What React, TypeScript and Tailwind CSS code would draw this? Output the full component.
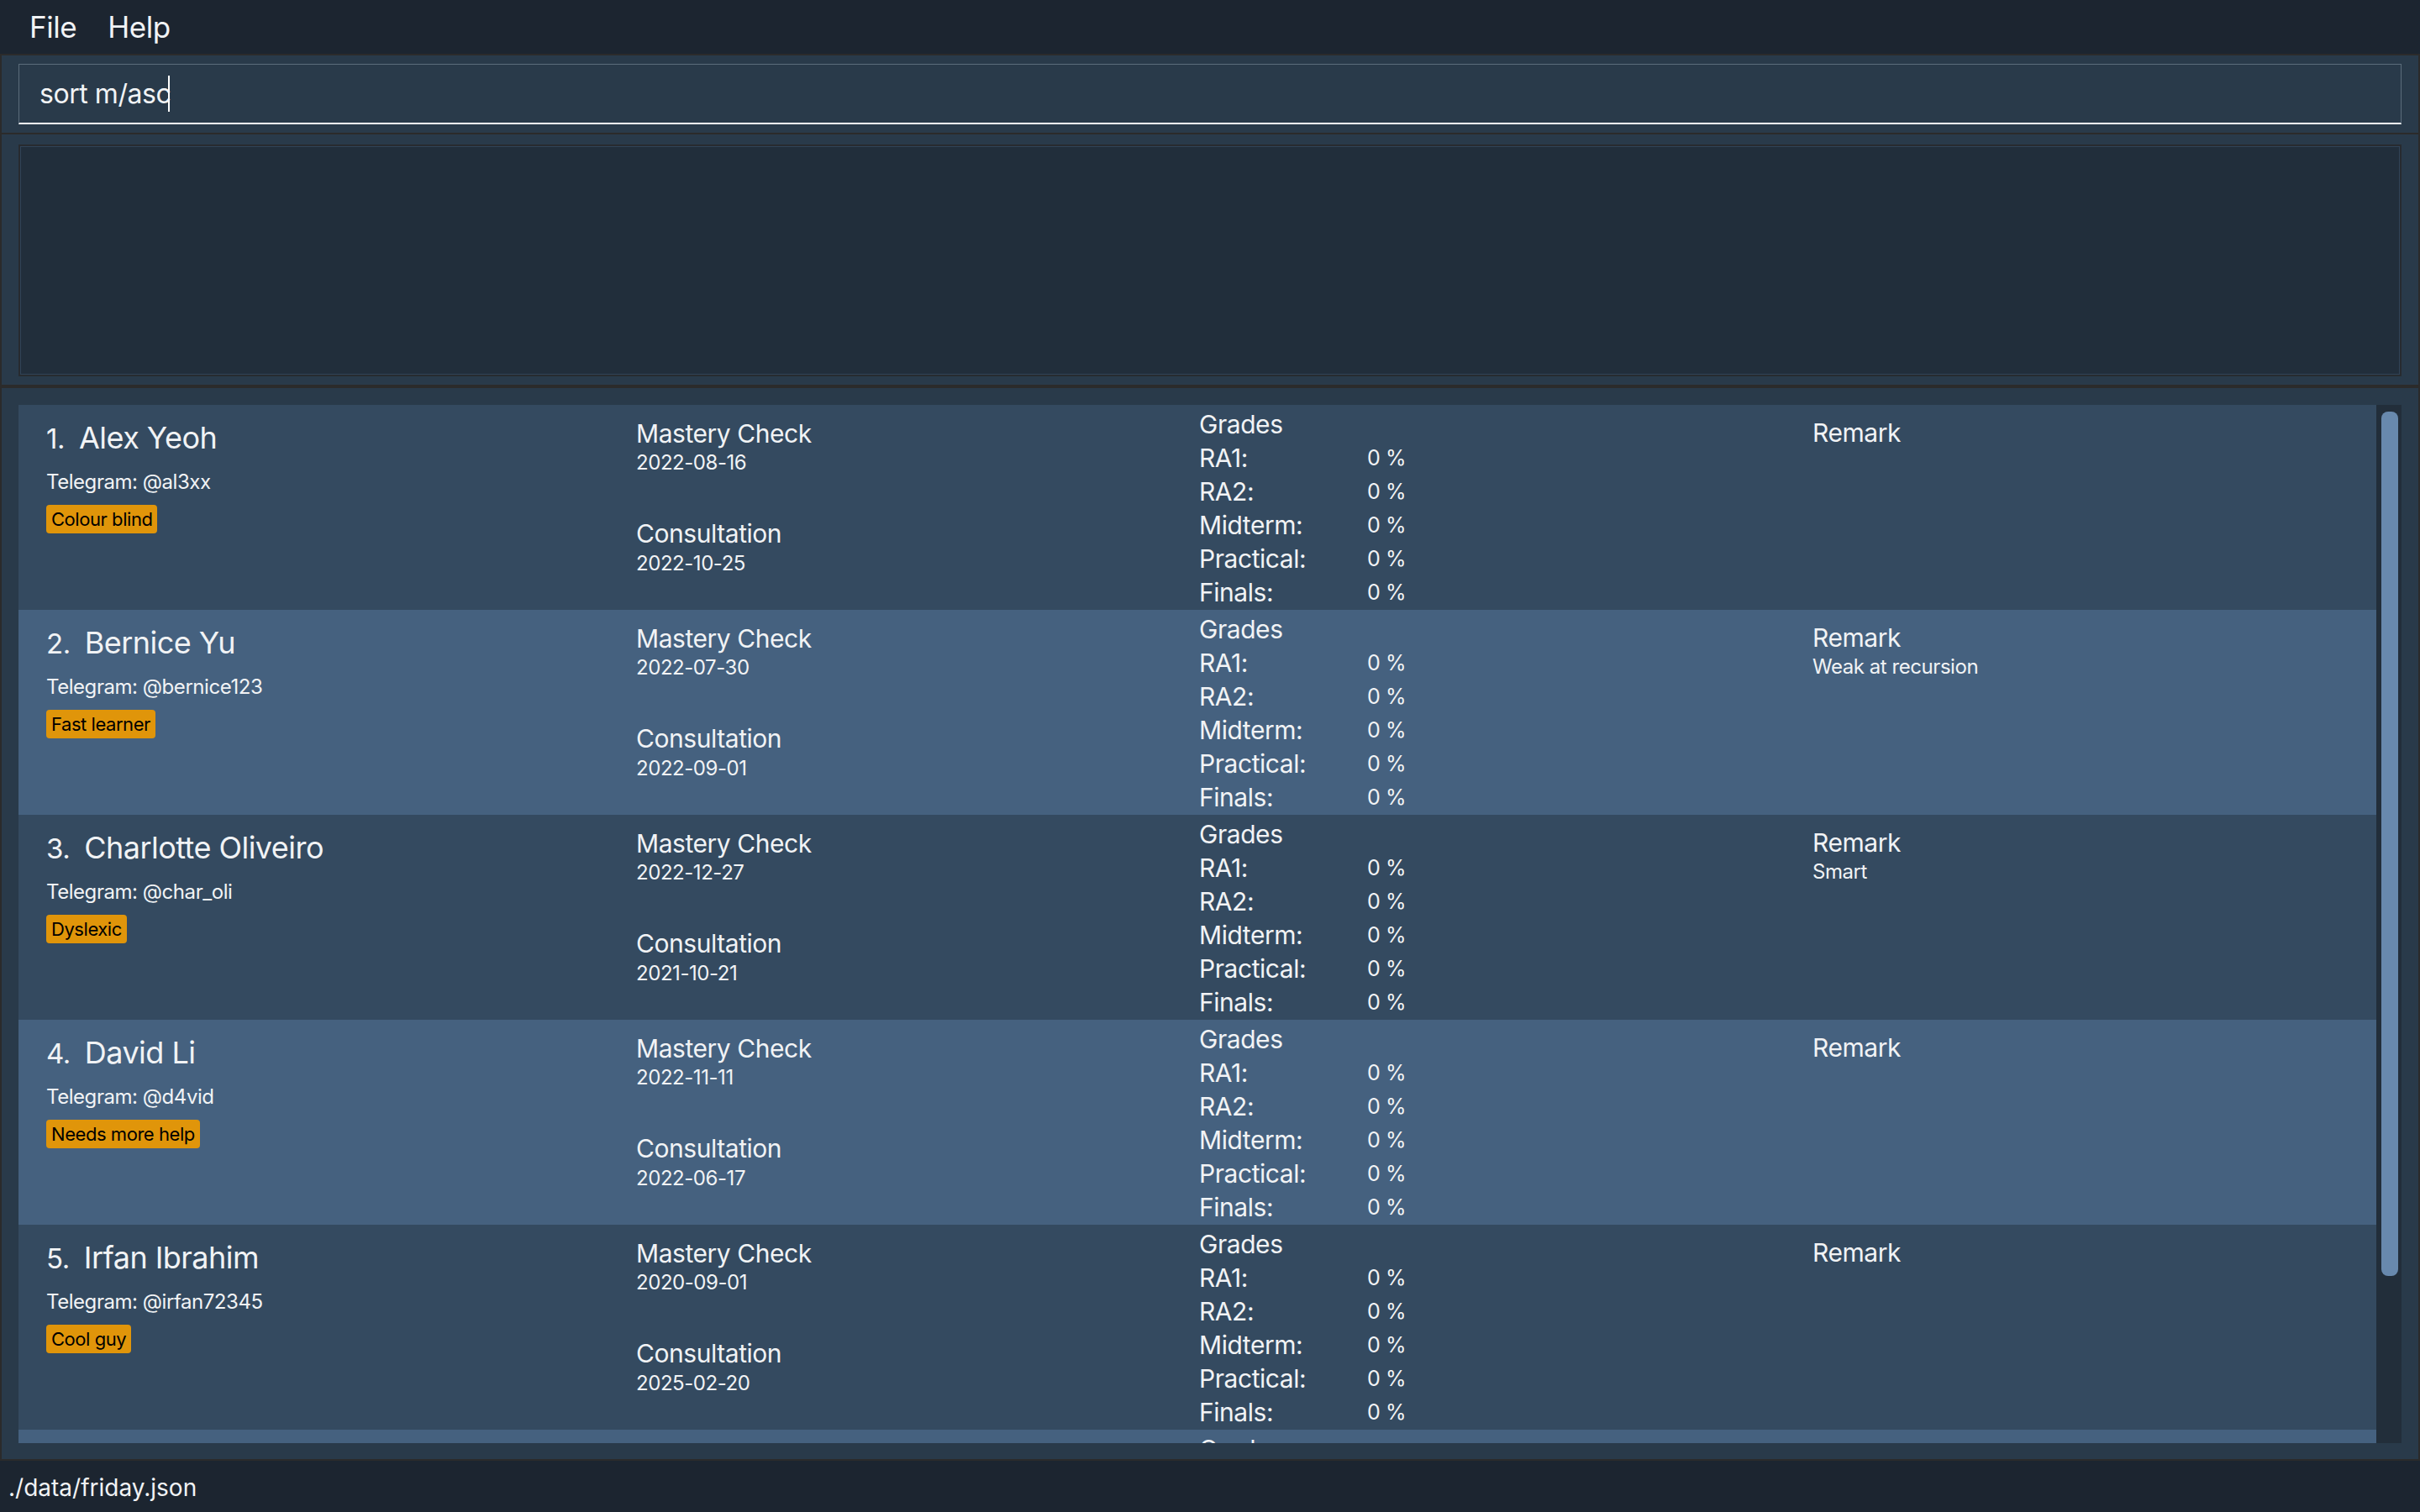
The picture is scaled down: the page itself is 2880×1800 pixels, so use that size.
import React from 'react';

type Student = {
  name: string;
  telegram: string;
  tags: string[];
  mastery: string;
  consultation: string;
  remark: string;
};

const STUDENTS: Student[] = [
  {
    name: 'Alex Yeoh',
    telegram: '@al3xx',
    tags: ['Colour blind'],
    mastery: '2022-08-16',
    consultation: '2022-10-25',
    remark: '',
  },
  {
    name: 'Bernice Yu',
    telegram: '@bernice123',
    tags: ['Fast learner'],
    mastery: '2022-07-30',
    consultation: '2022-09-01',
    remark: 'Weak at recursion',
  },
  {
    name: 'Charlotte Oliveiro',
    telegram: '@char_oli',
    tags: ['Dyslexic'],
    mastery: '2022-12-27',
    consultation: '2021-10-21',
    remark: 'Smart',
  },
  {
    name: 'David Li',
    telegram: '@d4vid',
    tags: ['Needs more help'],
    mastery: '2022-11-11',
    consultation: '2022-06-17',
    remark: '',
  },
  {
    name: 'Irfan Ibrahim',
    telegram: '@irfan72345',
    tags: ['Cool guy'],
    mastery: '2020-09-01',
    consultation: '2025-02-20',
    remark: '',
  },
  {
    name: 'Roy Balakrishnan',
    telegram: '@roy_b',
    tags: ['Quiet'],
    mastery: '2022-09-14',
    consultation: '2022-10-03',
    remark: '',
  },
];

const GRADES = ['RA1:', 'RA2:', 'Midterm:', 'Practical:', 'Finals:'];

function StudentCard({ student, index }: { student: Student; index: number }) {
  return (
    <div
      className={`grid h-[244px] shrink-0 grid-cols-[702px_670px_730px_1fr] pl-[33px] ${
        index % 2 === 0 ? 'bg-[#344a60]' : 'bg-[#45617f]'
      }`}
    >
      <div className="flex flex-col items-start pt-[17px]">
        <div className="flex items-baseline gap-[17px] leading-[44px]">
          <span className="text-[33px]">{index + 1}.</span>
          <span className="text-[36px] tracking-[-0.015em]">{student.name}</span>
        </div>
        <div className="mt-[15px] text-[24px] leading-[30px]">
          Telegram: {student.telegram}
        </div>
        <div className="mt-[12px] flex gap-[8px]">
          {student.tags.map((tag) => (
            <span
              key={tag}
              className="h-[34px] rounded-[4px] bg-[#e0950a] px-[6px] text-[22px] leading-[34px] text-black"
            >
              {tag}
            </span>
          ))}
        </div>
      </div>

      <div className="flex flex-col pt-[16px]">
        <div className="text-[30px] leading-[36px]">Mastery Check</div>
        <div className="mt-[2px] text-[24px] leading-[30px]">{student.mastery}</div>
        <div className="mt-[51px] text-[30px] leading-[36px]">Consultation</div>
        <div className="mt-[3px] text-[24px] leading-[30px]">
          {student.consultation}
        </div>
      </div>

      <div className="flex flex-col pt-[3px]">
        <div className="text-[30px] leading-[40px]">Grades</div>
        {GRADES.map((label) => (
          <div key={label} className="flex leading-[40px]">
            <span className="w-[200px] text-[30px]">{label}</span>
            <span className="text-[25px]">0 %</span>
          </div>
        ))}
      </div>

      <div className="flex flex-col pt-[15px]">
        <div className="text-[30px] leading-[36px]">Remark</div>
        {student.remark && (
          <div className="mt-[2px] text-[24px] leading-[30px]">{student.remark}</div>
        )}
      </div>
    </div>
  );
}

export default function App() {
  return (
    <div className="flex h-screen w-full flex-col overflow-hidden bg-[#1c2530] font-[Inter,sans-serif] tracking-[-0.028em] text-[#f1f3f5]">
      {/* menu bar */}
      <div className="flex h-[64px] shrink-0 items-center gap-[37px] pl-[35px] text-[35px] leading-[64px]">
        <span>File</span>
        <span>Help</span>
      </div>

      {/* command box */}
      <div className="h-[96px] shrink-0 border-2 border-[#2b2b2b] bg-[#293a4a] px-[20px] py-[10px]">
        <div className="flex h-[72px] items-center border border-b-2 border-[#5b6c7b] border-b-white pl-[24px]">
          <span className="text-[32px] leading-[40px]">sort m/asc</span>
          <span className="ml-[-3px] h-[43px] w-[2px] bg-white" />
        </div>
      </div>

      {/* result display */}
      <div className="h-[300px] shrink-0 border-2 border-t-0 border-[#2b2b2b] bg-[#293a4a] px-[20px] pb-[10px] pt-[12px]">
        <div className="h-full border-2 border-[#272b30]">
          <div className="h-full border border-[#304357] bg-[#212e3b]" />
        </div>
      </div>

      {/* person list */}
      <div className="flex min-h-0 flex-1 border-2 border-[#2b2b2b] bg-[#293a4a] px-[20px] pb-[19px] pt-[20px]">
        <div className="flex min-w-0 flex-1 flex-col overflow-hidden">
          {STUDENTS.map((s, i) => (
            <StudentCard key={s.name} student={s} index={i} />
          ))}
        </div>
        <div className="w-[30px] shrink-0 bg-[#222e3a] pl-[6px] pr-[4px] pt-[8px]">
          <div className="h-[1029px] rounded-[8px] bg-[#6889ad]" />
        </div>
      </div>

      {/* status bar */}
      <div className="h-[61px] shrink-0 pl-[10px] pt-[16px] text-[28px] leading-[33px] tracking-normal">
        ./data/friday.json
      </div>
    </div>
  );
}
